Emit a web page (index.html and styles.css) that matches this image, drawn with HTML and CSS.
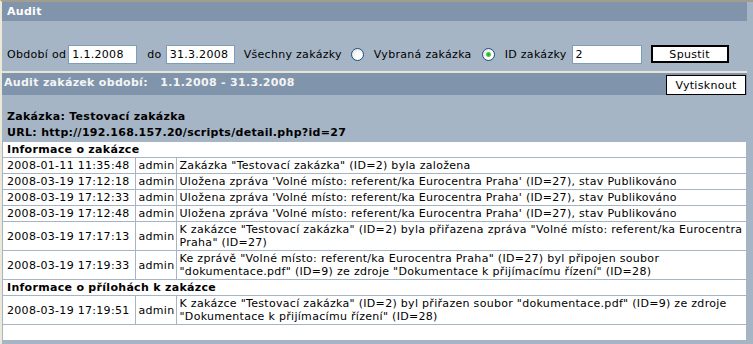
FILE: index.html
```html
<!DOCTYPE html>
<html lang="cs">
<head>
  <meta charset="UTF-8">
  <title>Audit</title>
  <link rel="stylesheet" href="styles.css">
</head>
<body>
  <div class="page">
    <div class="titulek">Audit</div>

    <form class="filtr">
      <label class="popis">Období od</label>
      <input type="text" class="pole datum" value="1.1.2008">
      <label class="popis do">do</label>
      <input type="text" class="pole datum2" value="31.3.2008">
      <label class="popis vse">Všechny zakázky</label>
      <input type="radio" name="rozsah" class="volba">
      <label class="popis vybrana">Vybraná zakázka</label>
      <input type="radio" name="rozsah" class="volba" checked>
      <label class="popis idz">ID zakázky</label>
      <input type="text" class="pole idpole" value="2">
      <button type="button" class="tlacitko spustit">Spustit</button>
    </form>

    <div class="lista">
      <span class="lista-text">Audit zakázek období:&nbsp;&nbsp;&nbsp;1.1.2008 - 31.3.2008</span>
      <button type="button" class="tlacitko tisk">Vytisknout</button>
    </div>

    <div class="info">
      <div>Zakázka: Testovací zakázka</div>
      <div>URL: http://192.168.157.20/scripts/detail.php?id=27</div>
    </div>

    <table class="zaznamy">
      <tr><th colspan="3">Informace o zakázce</th></tr>
      <tr><td class="cas">2008-01-11 11:35:48</td><td class="kdo">admin</td><td>Zakázka "Testovací zakázka" (ID=2) byla založena</td></tr>
      <tr><td class="cas">2008-03-19 17:12:18</td><td class="kdo">admin</td><td>Uložena zpráva 'Volné místo: referent/ka Eurocentra Praha' (ID=27), stav Publikováno</td></tr>
      <tr><td class="cas">2008-03-19 17:12:33</td><td class="kdo">admin</td><td>Uložena zpráva 'Volné místo: referent/ka Eurocentra Praha' (ID=27), stav Publikováno</td></tr>
      <tr><td class="cas">2008-03-19 17:12:48</td><td class="kdo">admin</td><td>Uložena zpráva 'Volné místo: referent/ka Eurocentra Praha' (ID=27), stav Publikováno</td></tr>
      <tr><td class="cas">2008-03-19 17:17:13</td><td class="kdo">admin</td><td>K zakázce "Testovací zakázka" (ID=2) byla přiřazena zpráva "Volné místo: referent/ka Eurocentra<br>Praha" (ID=27)</td></tr>
      <tr><td class="cas">2008-03-19 17:19:33</td><td class="kdo">admin</td><td>Ke zprávě "Volné místo: referent/ka Eurocentra Praha" (ID=27) byl připojen soubor<br>"dokumentace.pdf" (ID=9) ze zdroje "Dokumentace k přijímacímu řízení" (ID=28)</td></tr>
      <tr><th colspan="3">Informace o přílohách k zakázce</th></tr>
      <tr><td class="cas">2008-03-19 17:19:51</td><td class="kdo">admin</td><td>K zakázce "Testovací zakázka" (ID=2) byl přiřazen soubor "dokumentace.pdf" (ID=9) ze zdroje<br>"Dokumentace k přijímacímu řízení" (ID=28)</td></tr>
      <tr><td colspan="3">&nbsp;</td></tr>
    </table>
  </div>
</body>
</html>
```

FILE: styles.css
```css
html, body {
  margin: 0;
  padding: 0;
}
body {
  background: #a6b5c6;
  border-top: 2px solid #a49d8f;
  border-left: 2px solid #ece9d8;
  font-family: "DejaVu Sans", Verdana, sans-serif;
  font-size: 11px;
  letter-spacing: 0.3px;
  color: #000;
  min-height: 342px;
}
.page {
  width: 745px;
}
.titulek {
  background: #8094ac;
  color: #fff;
  font-weight: bold;
  height: 19px;
  line-height: 19px;
  padding-left: 5px;
}
.filtr {
  display: flex;
  align-items: center;
  height: 19px;
  margin: 24px 0 0 0;
  padding-left: 5px;
}
.pole {
  box-sizing: border-box;
  height: 19px;
  border: 1px solid #7f9db9;
  background: #fff;
  padding: 0 3px;
  margin: 0;
  font-family: inherit;
  font-size: 11px;
  letter-spacing: inherit;
  color: #000;
}
.datum { width: 69px; margin-left: 2px; }
.datum2 { width: 69px; margin-left: 4px; }
.idpole { width: 70px; margin-left: 5px; }
.do { margin-left: 10px; }
.vse { margin-left: 9px; }
.vybrana { margin-left: 10px; }
.idz { margin-left: 10px; }

.volba {
  appearance: none;
  -webkit-appearance: none;
  box-sizing: border-box;
  width: 13px;
  height: 13px;
  margin: 0 0 0 9px;
  border: 1px solid #1c5180;
  border-radius: 50%;
  background: radial-gradient(circle at 65% 65%, #fff 30%, #dcdcd6 100%);
}
.volba:checked {
  background: radial-gradient(circle, #21a121 0, #4cc94c 2px, transparent 3px),
              radial-gradient(circle at 65% 65%, #fff 30%, #dcdcd6 100%);
}
.vybrana + .volba { margin-left: 10px; }

.tlacitko {
  box-sizing: border-box;
  background: #fff;
  color: #000;
  font-family: inherit;
  font-size: 11px;
  letter-spacing: inherit;
  padding: 0;
  cursor: pointer;
}
.spustit {
  width: 78px;
  height: 18px;
  border: 2px solid #000;
  margin-left: 9px;
  align-self: flex-start;
}
.lista {
  display: flex;
  justify-content: space-between;
  align-items: flex-end;
  height: 22px;
  margin-top: 7px;
  border-top: 2px solid #e6e3d8;
  background: #8094ac;
}
.lista-text {
  align-self: flex-start;
  color: #f4f4f4;
  font-weight: bold;
  line-height: 19px;
  padding-left: 2px;
}
.tisk {
  width: 80px;
  height: 20px;
  border: 1px solid #000;
  margin-right: 1px;
}
.info {
  padding-top: 14px;
  padding-left: 5px;
  font-weight: bold;
  line-height: 16px;
}
.zaznamy {
  width: 745px;
  border-collapse: collapse;
  background: #fff;
  border: 1px solid #a6b5c6;
}
.zaznamy th,
.zaznamy td {
  border: 1px solid #a6b5c6;
  padding: 1px 4px;
  line-height: 13px;
  text-align: left;
  vertical-align: middle;
  white-space: nowrap;
}
.zaznamy td {
  padding-left: 3px;
}
.zaznamy th {
  font-weight: bold;
}
.cas, .kdo {
  width: 1px;
}
.zaznamy .cas {
  padding: 1px 5px 1px 4px;
}
.zaznamy .kdo {
  padding: 1px 1px 1px 3px;
}
```
